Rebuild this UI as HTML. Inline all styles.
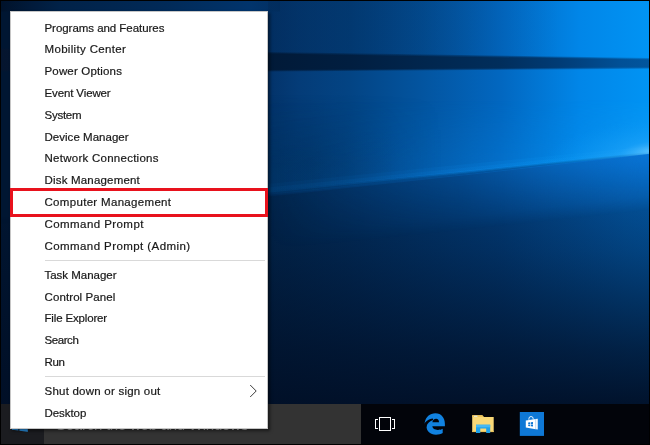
<!DOCTYPE html>
<html>
<head>
<meta charset="utf-8">
<title>Win+X Menu</title>
<style>
html,body{margin:0;padding:0;}
body{width:650px;height:445px;overflow:hidden;background:#000;position:relative;font-family:"Liberation Sans",sans-serif;}
#desk{position:absolute;left:0;top:0;width:650px;height:445px;overflow:hidden;}
#desk>svg{position:absolute;left:0;top:0;}
#taskbar{position:absolute;left:1px;top:404px;width:648px;height:40px;background:#02040a;}
#start{position:absolute;left:0;top:0;width:43px;height:40px;background:#1b1c20;}
#search{position:absolute;left:43px;top:0;width:317px;height:40px;background:#333333;color:#b4b4b4;font-size:15px;}
#search span{position:absolute;left:12px;top:11px;line-height:20px;white-space:nowrap;letter-spacing:-0.25px;opacity:0.999}
#menu{position:absolute;left:10px;top:11px;width:258px;height:417.5px;background:#fff;box-shadow:inset 0 0 0 1px #c6c6c6,2px 2px 3px rgba(0,0,0,.5);}
.it{position:absolute;left:34.5px;height:22px;line-height:22px;font-size:11.5px;color:#181818;-webkit-text-stroke:0.2px #181818;white-space:nowrap;opacity:0.999;}
.sep{position:absolute;left:35px;width:220px;height:1px;background:#d9d9d9;}
#hl{position:absolute;left:0;top:177px;width:252px;height:23px;border:3px solid #e8121d;}
#chev{position:absolute;left:238px;top:373px;}
</style>
</head>
<body>
<div id="desk">
<svg width="650" height="445" viewBox="0 0 650 445">
<defs>
<linearGradient id="gMid" gradientUnits="userSpaceOnUse" x1="0" x2="650" y1="0" y2="0"><stop offset="0" stop-color="#001632"/><stop offset="0.02" stop-color="#001632"/><stop offset="0.412" stop-color="#03336a"/><stop offset="0.46" stop-color="#043c78"/><stop offset="0.538" stop-color="#034484"/><stop offset="0.646" stop-color="#03549f"/><stop offset="0.77" stop-color="#0267c0"/><stop offset="0.892" stop-color="#0186e8"/><stop offset="1" stop-color="#0194f4"/></linearGradient>
<linearGradient id="gBand" gradientUnits="userSpaceOnUse" x1="0" x2="650" y1="0" y2="0"><stop offset="0" stop-color="#05152f"/><stop offset="0.412" stop-color="#011a38"/><stop offset="0.538" stop-color="#011e40"/><stop offset="0.77" stop-color="#012e5c"/><stop offset="0.862" stop-color="#013c76"/><stop offset="0.954" stop-color="#015096"/><stop offset="1" stop-color="#02569e"/></linearGradient>
<linearGradient id="gLowH" gradientUnits="userSpaceOnUse" x1="0" x2="650" y1="0" y2="0"><stop offset="0" stop-color="#011632"/><stop offset="0.02" stop-color="#011632"/><stop offset="0.415" stop-color="#02264e"/><stop offset="0.538" stop-color="#022d5c"/><stop offset="0.77" stop-color="#023e7c"/><stop offset="0.96" stop-color="#0356a2"/><stop offset="1" stop-color="#035aa8"/></linearGradient>
<linearGradient id="gLowV" gradientUnits="userSpaceOnUse" x1="0" x2="0" y1="165" y2="404"><stop offset="0" stop-color="#010f26" stop-opacity="0"/><stop offset="0.356" stop-color="#010f26" stop-opacity="0.30"/><stop offset="0.774" stop-color="#010f26" stop-opacity="0.75"/><stop offset="1" stop-color="#010f26" stop-opacity="0.95"/></linearGradient>
<linearGradient id="gRay" gradientUnits="userSpaceOnUse" x1="268" x2="650" y1="0" y2="0"><stop offset="0" stop-color="#0a86e6" stop-opacity="0.12"/><stop offset="0.35" stop-color="#0a86e6" stop-opacity="0.25"/><stop offset="0.8" stop-color="#0a94f0" stop-opacity="0.7"/><stop offset="1" stop-color="#28a8fa" stop-opacity="1"/></linearGradient>
<linearGradient id="gGlowV" gradientUnits="userSpaceOnUse" x1="0" x2="0" y1="100" y2="175"><stop offset="0" stop-color="#fff" stop-opacity="0"/><stop offset="1" stop-color="#fff" stop-opacity="1"/></linearGradient>
<linearGradient id="gShadeH" gradientUnits="userSpaceOnUse" x1="0" x2="650" y1="0" y2="0"><stop offset="0.412" stop-color="#012a54" stop-opacity="0.7"/><stop offset="0.477" stop-color="#012a54" stop-opacity="0.64"/><stop offset="0.554" stop-color="#012a54" stop-opacity="0.3"/><stop offset="0.615" stop-color="#012a54" stop-opacity="0.06"/><stop offset="0.68" stop-color="#012a54" stop-opacity="0"/></linearGradient>
<linearGradient id="gShadeV" gradientUnits="userSpaceOnUse" x1="0" x2="0" y1="95" y2="165"><stop offset="0" stop-color="#fff" stop-opacity="0"/><stop offset="1" stop-color="#fff" stop-opacity="1"/></linearGradient>
<mask id="mShade"><rect x="0" y="0" width="650" height="445" fill="url(#gShadeV)"/></mask>
<linearGradient id="gTopS" gradientUnits="userSpaceOnUse" x1="0" x2="280" y1="0" y2="0"><stop offset="0" stop-color="#00122a"/><stop offset="0.107" stop-color="#011a3a"/><stop offset="0.214" stop-color="#012248"/><stop offset="0.59" stop-color="#012a58"/><stop offset="0.89" stop-color="#01346c"/><stop offset="1" stop-color="#023063"/></linearGradient>
<linearGradient id="gSubP" gradientUnits="userSpaceOnUse" x1="459" y1="174" x2="465" y2="230"><stop offset="0" stop-color="#0a80ea" stop-opacity="0.7"/><stop offset="0.25" stop-color="#0a80ea" stop-opacity="0.55"/><stop offset="0.5" stop-color="#0a80ea" stop-opacity="0.4"/><stop offset="0.75" stop-color="#0a80ea" stop-opacity="0.25"/><stop offset="1" stop-color="#0a80ea" stop-opacity="0"/></linearGradient>
<linearGradient id="gSubM" gradientUnits="userSpaceOnUse" x1="268" x2="650" y1="0" y2="0"><stop offset="0" stop-color="#fff" stop-opacity="0"/><stop offset="0.5" stop-color="#fff" stop-opacity="0.33"/><stop offset="0.76" stop-color="#fff" stop-opacity="0.7"/><stop offset="1" stop-color="#fff" stop-opacity="1"/></linearGradient>
<mask id="mSub"><rect x="0" y="0" width="650" height="445" fill="url(#gSubM)"/></mask>
<radialGradient id="gTip" gradientUnits="userSpaceOnUse" cx="652" cy="151" r="110" gradientTransform="translate(652,151) rotate(-6) scale(1,0.3) translate(-652,-151)"><stop offset="0" stop-color="#60c4ff" stop-opacity="0.9"/><stop offset="0.3" stop-color="#22a6fa" stop-opacity="0.45"/><stop offset="1" stop-color="#0a98f2" stop-opacity="0"/></radialGradient>
<linearGradient id="gTopO" gradientUnits="userSpaceOnUse" x1="0" x2="650" y1="0" y2="0"><stop offset="0.412" stop-color="#012a58" stop-opacity="0.5"/><stop offset="0.538" stop-color="#012a58" stop-opacity="0.45"/><stop offset="0.646" stop-color="#012a58" stop-opacity="0.3"/><stop offset="0.77" stop-color="#012a58" stop-opacity="0.07"/><stop offset="0.86" stop-color="#012a58" stop-opacity="0"/></linearGradient>
<mask id="mGlow"><rect x="0" y="0" width="650" height="445" fill="url(#gGlowV)"/></mask>
<clipPath id="cUp"><polygon points="0,0 650,0 650,153.8 468,173.8 268,194.4 0,222"/></clipPath>
<clipPath id="cL1"><polygon points="1,218 268,190.8 468,171.2 650,151.8 650,445 1,445"/></clipPath>
<clipPath id="cL2"><polygon points="1,220 268,192.8 468,172.5 650,152.6 650,445 1,445"/></clipPath>
<clipPath id="cL3"><polygon points="1,222 268,194.8 468,173.8 650,153.4 650,445 1,445"/></clipPath>
<clipPath id="cL4"><polygon points="1,224 268,196.8 468,175 650,154.2 650,445 1,445"/></clipPath>
<g id="low"><rect x="1" y="140" width="648" height="305" fill="url(#gLowH)"/><rect x="1" y="140" width="648" height="305" fill="url(#gLowV)"/></g>
</defs>
<rect x="0" y="0" width="650" height="445" fill="#000"/>
<rect x="1" y="1" width="648" height="443" fill="url(#gMid)"/>
<rect x="1" y="1" width="279" height="10.5" fill="url(#gTopS)"/>
<polygon points="268,1 650,1 650,59 268,53" fill="url(#gTopO)"/>
<polygon points="1,48 268,52 650,58 650,68.8 268,71.6 1,71.6" fill="url(#gBand)" opacity="0.4"/>
<polygon points="1,48.8 268,52.8 650,58.8 650,68 268,70.8 1,70.8" fill="url(#gBand)" opacity="0.6"/>
<polygon points="1,49.6 268,53.6 650,59.6 650,67.2 268,70 1,70" fill="url(#gBand)"/>
<g clip-path="url(#cUp)"><rect x="266" y="90" width="336" height="130" fill="url(#gShadeH)" mask="url(#mShade)"/></g>
<g clip-path="url(#cUp)"><rect x="268" y="90" width="382" height="130" fill="url(#gRay)" mask="url(#mGlow)" opacity="0.5"/></g>
<polygon points="268,184 468,164 650,146.5 650,154.5 468,175 268,196" fill="url(#gRay)" opacity="0.3"/>
<polygon points="268,187.5 468,167.5 650,149 650,154.5 468,175 268,196" fill="url(#gRay)" opacity="0.4"/>
<polygon points="268,190.8 468,170.6 650,151.2 650,154.5 468,175 268,196" fill="url(#gRay)" opacity="0.6"/>
<use href="#low" clip-path="url(#cL1)" opacity="0.25"/>
<use href="#low" clip-path="url(#cL2)" opacity="0.33"/>
<use href="#low" clip-path="url(#cL3)" opacity="0.5"/>
<use href="#low" clip-path="url(#cL4)"/>
<polygon points="268,194 468,174 650,153.5 650,220 268,256" fill="url(#gSubP)" mask="url(#mSub)"/>
<rect x="530" y="100" width="120" height="70" fill="url(#gTip)" clip-path="url(#cUp)"/>
<rect x="0" y="0" width="650" height="1" fill="#000"/><rect x="0" y="444" width="650" height="1" fill="#000"/>
<rect x="0" y="0" width="1" height="445" fill="#000"/><rect x="649" y="0" width="1" height="445" fill="#000"/>
</svg>

<div id="taskbar">
<div id="start"></div>
<div id="search"><span>Search the web and Windows</span></div>
<svg style="position:absolute;left:0;top:0" width="648" height="40" viewBox="1 404 648 40">
<!-- start logo -->
<g fill="#2b9af0"><polygon points="12,418.4 18.4,417.5 18.4,423.6 12,423.6"/><polygon points="19.4,417.3 27.8,416.1 27.8,423.6 19.4,423.6"/><polygon points="12,424.6 18.4,424.6 18.4,430.6 12,429.8"/><polygon points="19.4,424.6 27.8,424.6 27.8,431.7 19.4,430.7"/></g>
<!-- task view -->
<g fill="none" stroke="#fff" stroke-width="1" shape-rendering="crispEdges"><rect x="379.5" y="417.5" width="11" height="13"/><path d="M378 419.5 H375.5 V428.5 H378 M392 419.5 H394.5 V428.5 H392"/></g>
<!-- edge -->
<g><path fill-rule="evenodd" d="M424.7 422.6 C425.6 417 430 413.2 435.3 413.2 C441.5 413.2 444.9 418 444.9 424 L444.9 426.3 L432.3 426.3 C432.5 428.6 434.8 429.9 437.8 429.9 C439.7 429.9 441.3 429.5 442.7 428.7 L442.7 433.1 C441 434.2 438.6 434.8 436 434.8 C430.2 434.8 426.5 431.2 426.5 426.3 L424.7 424.5 Z M432.4 422.2 C432.7 420.2 434.1 418.8 436.1 418.8 C438 418.8 439 420 439 422.2 Z" fill="#1182e0"/><path d="M424.4 423.2 C426.5 420.7 429.3 419.1 432.8 418.6 L433.2 419.9 C429.8 420.9 427.2 423 426.5 426.8 L423.5 426.8 Z" fill="#02040a"/></g>
<!-- explorer -->
<g><path d="M472.2 415.3 H482.3 L483.8 416.9 H493.7 V432.1 H472.2 Z" fill="#f9d877"/><path d="M472.2 415.3 H482.3 L483.8 416.9 H472.2 Z" fill="#ecc35a"/><rect x="474" y="415.8" width="3.4" height="1" fill="#dff1f4"/><rect x="472.2" y="431" width="21.5" height="1.1" fill="#e9c25b"/><path d="M476 424.7 H490.2 V433 H486.2 V428.5 H480.3 V433 H476 Z" fill="#1fa2ea"/><rect x="476" y="424.7" width="14.2" height="2.6" fill="#46b8f3"/></g>
<!-- store -->
<g><rect x="519.8" y="412" width="24.2" height="23.9" fill="#0e78d6"/><path d="M525.8 420.6 L535.7 419.1 L535.7 429.2 L525.8 427.6 Z" fill="#fff"/><path d="M535.7 419.1 L537.8 418.8 L537.8 429.6 L535.7 429.2 Z" fill="#f2f7fc"/><path d="M528.9 419.8 V418.8 A2.15 2.3 0 0 1 533.2 418.8 V419.4" fill="none" stroke="#fff" stroke-width="0.9"/><g fill="#0e78d6"><polygon points="528.2,422.5 530.2,422.3 530.2,424 528.2,424"/><polygon points="530.9,422.25 533,422 533,424 530.9,424"/><polygon points="528.2,424.6 530.2,424.6 530.2,426.2 528.2,426"/><polygon points="530.9,424.6 533,424.6 533,426.5 530.9,426.3"/></g></g>
</svg>

</div>
</div>
<div id="menu">
<div class="it" style="top:6px;letter-spacing:-0.046px">Programs and Features</div>
<div class="it" style="top:27px;letter-spacing:0.328px">Mobility Center</div>
<div class="it" style="top:49px;letter-spacing:0.164px">Power Options</div>
<div class="it" style="top:71px;letter-spacing:-0.122px">Event Viewer</div>
<div class="it" style="top:93px;letter-spacing:-0.249px">System</div>
<div class="it" style="top:115px;letter-spacing:0.028px">Device Manager</div>
<div class="it" style="top:136px;letter-spacing:0.260px">Network Connections</div>
<div class="it" style="top:158px;letter-spacing:0.187px">Disk Management</div>
<div class="it" style="top:180px;letter-spacing:0.316px">Computer Management</div>
<div class="it" style="top:202px;letter-spacing:0.430px">Command Prompt</div>
<div class="it" style="top:224px;letter-spacing:0.421px">Command Prompt (Admin)</div>
<div class="it" style="top:253px;letter-spacing:-0.021px">Task Manager</div>
<div class="it" style="top:275px;letter-spacing:0.101px">Control Panel</div>
<div class="it" style="top:296px;letter-spacing:-0.155px">File Explorer</div>
<div class="it" style="top:318px;letter-spacing:-0.428px">Search</div>
<div class="it" style="top:340px;letter-spacing:-0.405px">Run</div>
<div class="it" style="top:369px;letter-spacing:0.228px">Shut down or sign out</div>
<div class="it" style="top:391px;letter-spacing:-0.065px">Desktop</div>
<div class="sep" style="top:249px"></div>
<div class="sep" style="top:365px"></div>
<div id="hl"></div>
<svg id="chev" width="10" height="14" viewBox="0 0 10 14"><path d="M2.2 1 L8.2 7 L2.2 13" fill="none" stroke="#3c3c3c" stroke-width="1"/></svg>
</div>
</body>
</html>
